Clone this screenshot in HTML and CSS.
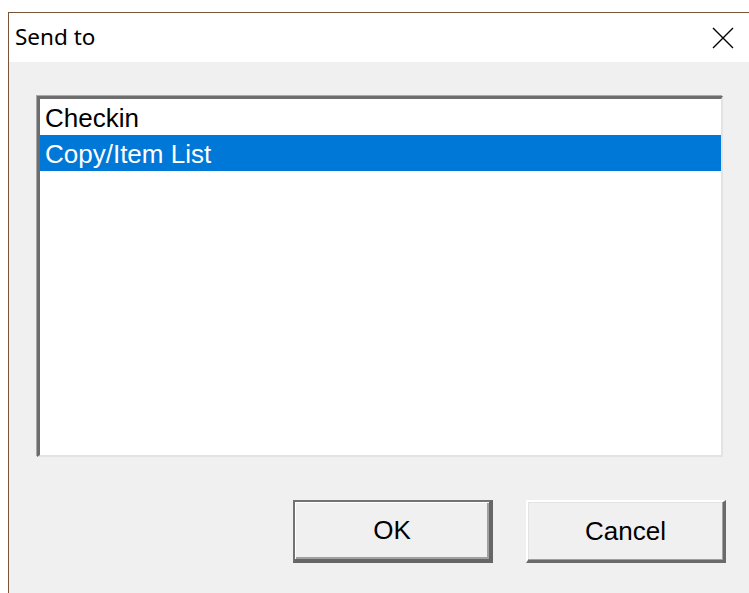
FILE: index.html
```html
<!DOCTYPE html>
<html lang="en">
<head>
<meta charset="utf-8">
<title>Send to</title>
<link rel="stylesheet" href="styles.css">
</head>
<body>
  <div class="window">
    <div class="titlebar">
      <span class="title">Send to</span>
      <button class="close" aria-label="Close">
        <svg width="22" height="22" viewBox="0 0 22 22">
          <path d="M1 1 L21 21 M21 1 L1 21" stroke="#000" stroke-width="1.4" fill="none"/>
        </svg>
      </button>
    </div>
    <div class="client">
      <ul class="listbox">
        <li class="item">Checkin</li>
        <li class="item selected">Copy/Item List</li>
      </ul>
      <div class="buttons">
        <button class="btn default">OK</button>
        <button class="btn">Cancel</button>
      </div>
    </div>
  </div>
</body>
</html>
```

FILE: styles.css
```css
html, body {
  margin: 0;
  padding: 0;
  background: #ffffff;
  height: 100%;
  overflow: hidden;
}

.window {
  margin: 12px 0 0 8px;
  border-top: 1px solid #7a5436;
  border-left: 1px solid #7a5436;
  height: calc(100% - 13px);
  display: flex;
  flex-direction: column;
  background: #f0f0f0;
}

.titlebar {
  height: 49px;
  background: #ffffff;
  display: flex;
  align-items: center;
  justify-content: space-between;
  padding: 0 15px 0 6px;
  flex: none;
}

.title {
  font-family: "Noto Sans", "Open Sans", sans-serif;
  font-size: 22.5px;
  color: #000;
  margin-top: -2px;
}

.close {
  background: none;
  border: 0;
  padding: 0;
  width: 22px;
  height: 22px;
  display: flex;
}

.client {
  flex: 1;
  padding: 34px 0 0 28px;
  display: flex;
  flex-direction: column;
}

.listbox {
  list-style: none;
  margin: 0;
  padding: 0;
  width: 686px;
  height: 361px;
  box-sizing: border-box;
  background: #ffffff;
  border-style: solid;
  border-width: 3px 2px 2px 3px;
  border-color: #6d6d6d #e3e3e3 #e3e3e3 #6d6d6d;
  box-shadow: -1px -1px 0 #a8a8a8;
}

.item {
  height: 36px;
  line-height: 38px;
  padding-left: 5px;
  font-family: "Liberation Sans", Arial, sans-serif;
  font-size: 26px;
  color: #000;
}

.item.selected {
  background: #0078d7;
  color: #ffffff;
}

.buttons {
  display: flex;
  gap: 33px;
  margin: 43px 0 0 256px;
}

.btn {
  width: 200px;
  height: 63px;
  box-sizing: border-box;
  background: #f0f0f0;
  font-family: "Liberation Sans", Arial, sans-serif;
  font-size: 26px;
  color: #000;
  padding: 0;
  border-style: solid;
  border-width: 2px 3px 3px 2px;
  border-color: #ffffff #6a6a6a #6a6a6a #ffffff;
  box-shadow: inset -1px -1px 0 #a0a0a0, inset 1px 1px 0 #e3e3e3;
}

.btn.default {
  border-width: 2px 4px 4px 2px;
  border-color: #727272 #666666 #666666 #727272;
  box-shadow: inset 1px 1px 0 #ffffff, inset -2px -2px 0 #a0a0a0;
}
```
